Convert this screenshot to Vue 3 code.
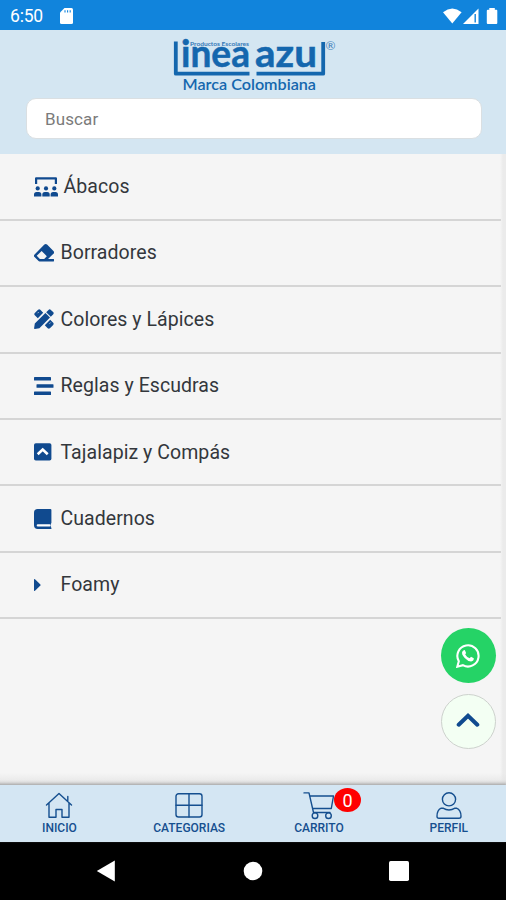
<script setup>
import { ref } from 'vue'

const query = ref('')
const cartCount = ref(0)

const categories = [
  { name: 'Ábacos', icon: 'class' },
  { name: 'Borradores', icon: 'eraser' },
  { name: 'Colores y Lápices', icon: 'pencils' },
  { name: 'Reglas y Escudras', icon: 'bars' },
  { name: 'Tajalapiz y Compás', icon: 'square' },
  { name: 'Cuadernos', icon: 'book' },
  { name: 'Foamy', icon: 'caret' },
]

const tabs = [
  { name: 'INICIO', icon: 'home' },
  { name: 'CATEGORIAS', icon: 'grid' },
  { name: 'CARRITO', icon: 'cart' },
  { name: 'PERFIL', icon: 'user' },
]
</script>

<template>
  <div class="screen">
    <div class="status">
      <span class="time">6:50</span>
      <svg class="sd" width="13" height="16" viewBox="0 0 13 16">
        <path d="M4.5 0H11.5Q13 0 13 1.5V14.5Q13 16 11.5 16H1.5Q0 16 0 14.5V4.5Z" fill="#fff" />
        <path d="M5 2.2V4.6M7.6 2.2V4.6M10.2 2.2V4.6" stroke="#1184dc" stroke-width="1.1" />
      </svg>
      <svg class="signals" width="56" height="16" viewBox="0 0 56 16" fill="#fff">
        <path d="M0 4.2Q9.3-3.2 18.6 4.2L9.3 15.6Z" />
        <path d="M35.5 .5V16H20Z" />
        <path d="M32.2 6V14.5" stroke="#1184dc" stroke-width="1.4" />
        <path d="M46.3 1.8V0H51.8V1.8H53.5Q54.3 1.8 54.3 2.8V15Q54.3 16 53.3 16H44.8Q43.8 16 43.8 15V2.8Q43.8 1.8 44.8 1.8Z" />
      </svg>
    </div>

    <header class="header">
      <svg class="logo" width="166" height="58" viewBox="170 38 166 58">
        <g fill="none" stroke="#1467ae" stroke-width="3.8" stroke-linejoin="round">
          <path d="M175.8 41.5V73.7H249.5" />
          <path d="M256.5 73.7H323.2V42" />
        </g>
        <g class="logo-word">
          <text x="181" y="67.3" textLength="69" lengthAdjust="spacingAndGlyphs">inea</text>
          <text x="255" y="67.3" textLength="62" lengthAdjust="spacingAndGlyphs">azu</text>
        </g>
        <text class="logo-top" x="190" y="45.6" textLength="59" lengthAdjust="spacingAndGlyphs">Productos Escolares</text>
        <text class="logo-reg" x="325.5" y="50">®</text>
        <text class="logo-sub" x="182.5" y="90" textLength="133.5" lengthAdjust="spacingAndGlyphs">Marca Colombiana</text>
      </svg>
      <input v-model="query" class="search" placeholder="Buscar">
    </header>

    <main class="content">
      <ul class="list">
        <li v-for="c in categories" :key="c.name" class="item">
          <svg v-if="c.icon === 'class'" class="icon wide" width="24" height="20" viewBox="0 0 24 20">
            <path d="M2.1 7V1.3H21.9V7" fill="none" stroke="currentColor" stroke-width="2.2" stroke-linejoin="round" />
            <circle cx="3.7" cy="11.4" r="2.1" /><circle cx="12" cy="11.4" r="2.1" /><circle cx="20.3" cy="11.4" r="2.1" />
            <path d="M0 19.5V17.6Q0 15 2.5 15H4.9Q7.4 15 7.4 17.6V19.5ZM8.3 19.5V17.6Q8.3 15 10.8 15H13.2Q15.7 15 15.7 17.6V19.5ZM16.6 19.5V17.6Q16.6 15 19.1 15H21.5Q24 15 24 17.6V19.5Z" />
          </svg>
          <svg v-else-if="c.icon === 'eraser'" class="icon" width="20" height="20" viewBox="0 0 512 512">
            <path d="M498 273a48 48 0 0 0 0-68L334 41a48 48 0 0 0-68 0L14 293a48 48 0 0 0 0 68l96 96a48 48 0 0 0 34 14h356a12 12 0 0 0 12-12v-40a12 12 0 0 0-12-12H360ZM195 204l133 133-67 70H150l-80-80Z" />
          </svg>
          <svg v-else-if="c.icon === 'pencils'" class="icon" width="20" height="20" viewBox="0 0 20 20">
            <path d="M.8 4.1 4.1.8Q5.2-.1 6.3.8L9.2 3.8 3.8 9.2.8 6.3Q-.2 5.2.8 4.1ZM10.8 16.2 16.2 10.8 19.2 13.7Q20.1 14.8 19.2 15.9L15.9 19.2Q14.8 20.1 13.7 19.2Z" />
            <path d="M.8 14.6 11.4 4 16 8.6 5.4 19.2.8 19.9Q0 20 .1 19.2ZM12.2 3.2 14.5.9Q15.7-.3 16.9.9L19.1 3.1Q20.3 4.3 19.1 5.5L16.8 7.8Z" />
            <path d="M4.6 3.2 3.6 4.2M16.6 13.6 15.6 14.6" stroke="#f5f5f5" stroke-width=".8" />
          </svg>
          <svg v-else-if="c.icon === 'bars'" class="icon" width="20" height="20" viewBox="0 0 20 20">
            <rect y="1" width="17" height="3.6" rx=".6" /><rect x="2.5" y="8.2" width="17" height="3.6" rx=".6" /><rect y="15.4" width="17" height="3.6" rx=".6" />
          </svg>
          <svg v-else-if="c.icon === 'square'" class="icon" width="20" height="20" viewBox="0 0 20 20">
            <rect y="1.2" width="17.4" height="17.4" rx="1.8" />
            <path d="M3.7 12.3 8.7 7.5 13.7 12.3" fill="none" stroke="#fff" stroke-width="2.6" />
          </svg>
          <svg v-else-if="c.icon === 'book'" class="icon" width="20" height="20" viewBox="0 0 20 20">
            <path d="M3.7 0H16.4Q17.4 0 17.4 1V13.8Q17.4 14.3 16.9 14.7V18.3Q17.4 18.5 17.4 19V20H3.7Q0 20 0 16.3V3.7Q0 0 3.7 0Z" />
            <path d="M3.8 16.4H15.6" stroke="#fff" stroke-width="2.2" stroke-linecap="round" />
          </svg>
          <svg v-else class="icon" width="20" height="20" viewBox="0 0 20 20">
            <path d="M0 4.7Q0 3.5 1 4.3L6.4 9.4Q6.9 10 6.4 10.6L1 15.7Q0 16.5 0 15.3Z" />
          </svg>
          <span>{{ c.name }}</span>
        </li>
      </ul>
      <div class="floating">
        <button class="fab whatsapp">
          <svg width="24" height="24" viewBox="0 0 24 24">
            <path d="M1.3 22.7 2.8 17.2A10.6 10.6 0 1 1 6.9 21.2Z" fill="none" stroke="#fff" stroke-width="2.1" />
            <path d="M7.4 6.5Q8 5.9 8.9 6.2L10 8.8Q10.1 9.4 9.2 10.4 10.8 13.2 13.7 14.3L15 12.8 17.8 14.2Q17.9 17 15.2 17.4 12 17.5 8.7 14 5 10 6.4 7.5Z" fill="#fff" />
          </svg>
        </button>
        <button class="fab up">
          <svg class="chevron" width="24" height="16" viewBox="0 0 24 16"><path d="M2.7 12.7 12 3.7 21.3 12.7" fill="none" stroke="#104a8f" stroke-width="4" stroke-linecap="round" /></svg>
        </button>
      </div>
    </main>

    <nav class="tabs">
      <a v-for="t in tabs" :key="t.name" class="tab">
        <svg class="tab-icon" width="30" height="28" viewBox="0 0 30 28">
          <template v-if="t.icon === 'home'">
            <path d="M2.5 13 15 1.5 27.5 13M5 11V25.2H12V17.5H18V25.2H25V11M23.8 8.5V4.5" />
          </template>
          <template v-else-if="t.icon === 'grid'">
            <rect x="2" y="1.7" width="26" height="23.3" rx="2.5" />
            <path d="M15 1.7V25M2 13.3H28" />
          </template>
          <template v-else-if="t.icon === 'cart'">
            <path d="M0 .9H5L9.5 20.5H26M6 4H29.5L27.3 16.5H8.6" />
            <circle cx="11" cy="23.7" r="2.8" /><circle cx="24.5" cy="23.7" r="2.8" />
          </template>
          <template v-else>
            <circle cx="15" cy="7.3" r="6.6" />
            <path d="M7.2 16.2H9Q15 19.8 21 16.2H22.5Q27 18 27 24.3Q27 26.3 25 26.3H5Q3 26.3 3 24.3Q3 18 7.2 16.2Z" />
          </template>
        </svg>
        <span>{{ t.name }}</span>
        <b v-if="t.icon === 'cart'" class="badge">{{ cartCount }}</b>
      </a>
    </nav>

    <div class="system">
      <svg width="20" height="22" viewBox="0 0 20 22"><path d="M.8 11 18.8.5V21.5Z" /></svg>
      <svg width="20" height="20" viewBox="0 0 20 20"><circle cx="10" cy="10" r="9.3" /></svg>
      <svg width="20" height="20" viewBox="0 0 20 20"><rect width="20" height="20" rx="1.7" /></svg>
    </div>
  </div>
</template>

<style>
body { margin:0; background:#000; }
</style>

<style scoped>
.screen { width:506px; height:900px; display:flex; flex-direction:column; overflow:hidden; font-family:Roboto,sans-serif; background:#f5f5f5; }
.status { height:30px; flex-shrink:0; box-sizing:border-box; display:flex; align-items:center; padding:0 8px 0 10px; background:#1184dc; color:#fff; }
.time { font-size:17.5px; width:50px; letter-spacing:-.2px; padding-top:1px; }
.sd { margin-top:1px; }
.signals { margin-left:auto; margin-right:-1px; margin-top:1px; }
.header { height:124px; flex-shrink:0; box-sizing:border-box; display:flex; flex-direction:column; align-items:center; padding-top:8px; background:#d4e6f2; }
.logo { flex-shrink:0; overflow:visible; fill:#1467ae; font-family:Lato,sans-serif; }
.logo-word { font-size:38px; font-weight:700; stroke:#1467ae; stroke-width:.5; }
.logo-top { font-size:5.5px; font-weight:700; opacity:.85; }
.logo-reg { font-size:12px; opacity:.8; }
.logo-sub { font-size:14.5px; font-weight:600; }
.search { width:456px; height:41px; box-sizing:border-box; flex-shrink:0; margin:2px 0 0 2px; padding:1px 18px 0; border:1px solid #dadfe2; border-radius:10px; background:#fff; outline:none; font-family:inherit; font-size:17px; color:#333; letter-spacing:.1px; }
.search::placeholder { color:#7b7b7b; opacity:1; }
.content { position:relative; flex:1; box-sizing:border-box; padding-right:5px; background:linear-gradient(to top,#c9c9c9,rgba(228,228,228,.6) 5px,transparent 12px),linear-gradient(to right,transparent 500px,#ebebeb 503px),#f5f5f5; }
.list { list-style:none; margin:0; padding:.4px 0 0; }
.item { height:66.4px; box-sizing:border-box; display:flex; align-items:center; padding-left:33.5px; border-bottom:2px solid #d5d5d5; color:#33373c; font-size:19.5px; letter-spacing:.06px; }
.icon { flex-shrink:0; margin-right:7px; color:#104a8f; fill:currentColor; }
.wide { margin-right:6px; }
.floating { position:absolute; right:10.5px; bottom:36px; display:flex; flex-direction:column; gap:11px; }
.fab { width:55px; height:55px; box-sizing:border-box; padding:0; border:none; border-radius:50%; display:flex; align-items:center; justify-content:center; }
.whatsapp { background:#25d366; }
.up { background:#f3fff3; border:1px solid #cdd2cd; }
.chevron { margin-bottom:3px; }
.tabs { height:57px; flex-shrink:0; box-sizing:border-box; display:grid; grid-template-columns:repeat(4,129.8px); margin-left:-5.5px; padding-top:7px; background:#d4e6f3; box-shadow:0 -1px 2px #aaa; position:relative; }
.tab { position:relative; display:flex; flex-direction:column; align-items:center; color:#154f8f; font-size:12px; line-height:14px; font-weight:500; }
.tab-icon { fill:none; stroke:currentColor; stroke-width:1.4; stroke-linejoin:round; stroke-linecap:round; margin-bottom:1px; overflow:visible; }
.badge { position:absolute; left:80px; top:-4px; width:27px; height:24px; border-radius:50%; background:#f00; color:#fff; font-size:18px; font-weight:400; line-height:25px; text-align:center; }
.system { height:58px; flex-shrink:0; box-sizing:border-box; display:flex; align-items:center; justify-content:space-between; padding:0 97px 0 96px; background:#000; }
.system svg { fill:#fff; }
</style>
